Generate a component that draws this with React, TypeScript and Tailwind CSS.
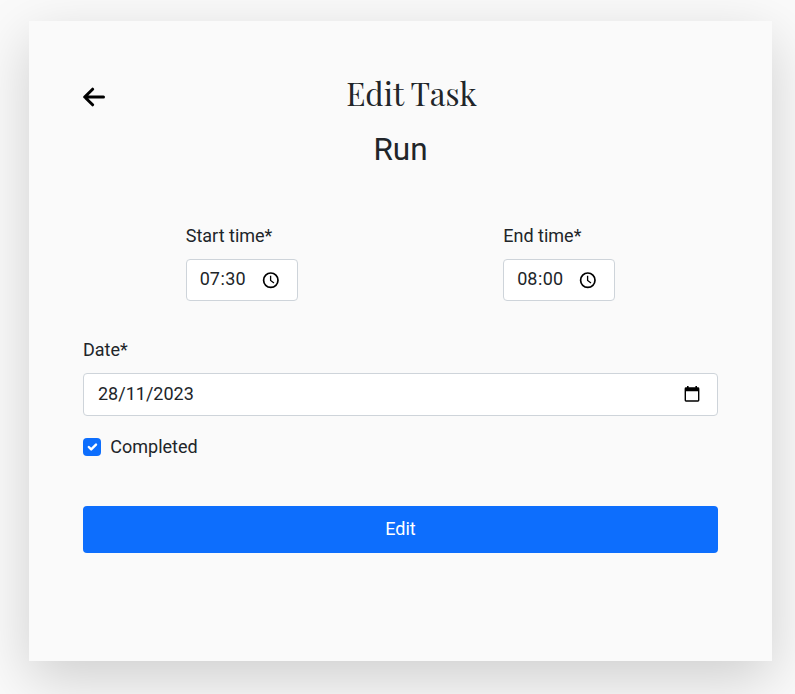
import type { ReactNode } from 'react';

function ClockIcon() {
  return (
    <svg className="-mt-px h-[18px] w-[18px] shrink-0" viewBox="0 0 18 18" fill="none" stroke="#000">
      <circle cx="8.8" cy="9.2" r="7.2" strokeWidth="1.7" />
      <path d="M8.6 4.8V9.5L12 12" strokeWidth="1.3" />
    </svg>
  );
}

function CalendarIcon() {
  return (
    <svg className="-mt-[2px] h-[18px] w-[18px] shrink-0" viewBox="0 0 18 18">
      <path
        fill="#000"
        fillRule="evenodd"
        d="M4 1H5.6V2.3H12.4V1H14V2.3H15Q16.4 2.3 16.4 3.7V15.3Q16.4 16.7 15 16.7H3Q1.6 16.7 1.6 15.3V3.7Q1.6 2.3 3 2.3H4ZM3 6.2V15.3H15V6.2Z"
      />
    </svg>
  );
}

function BackArrow() {
  return (
    <svg
      className="mt-[3px] h-[20px] w-[22px]"
      viewBox="0 0 22 20"
      fill="none"
      stroke="#000"
      strokeWidth="3"
      strokeLinecap="round"
      strokeLinejoin="round"
    >
      <path d="M20.5 10H2M9.6 2.2L1.7 10L9.6 17.8" />
    </svg>
  );
}

function TimeField({ label, children }: { label: string; children: ReactNode }) {
  return (
    <div className="flex w-1/2 justify-center">
      <div className="w-[112px]">
        <div className="h-[27px] whitespace-nowrap">{label}</div>
        <div className="mt-[10px] flex h-[42px] items-center justify-between rounded-[4px] border border-[#ced4da] bg-white pr-[17px] pl-[13px]">
          <span className="-mt-[3px] flex">{children}</span>
          <ClockIcon />
        </div>
      </div>
    </div>
  );
}

export default function App() {
  return (
    <div className="h-[694px] w-full overflow-hidden bg-[#fafafa] pt-[21px] pl-[29px] font-['Roboto',sans-serif] text-[18px] leading-[27px] text-[#212529]">
      <main className="h-[640px] w-[743px] bg-[#fafafa] px-[54px] pt-[54px] shadow-[0_18px_54px_rgba(0,0,0,0.175)]">
        <header className="flex h-[40px] items-center">
          <BackArrow />
          <h1 className="-mt-[4px] flex-1 text-center font-['Playfair_Display','Liberation_Serif',serif] text-[31.5px] leading-[38px]">
            Edit Task
          </h1>
        </header>
        <h2 className="mt-[16px] text-center text-[31.5px] leading-[38px]">Run</h2>
        <div className="mt-[53px] flex">
          <TimeField label="Start time*">
            <span>07</span>
            <span className="px-[0.5px]">:</span>
            <span>30</span>
          </TimeField>
          <TimeField label="End time*">
            <span>08</span>
            <span className="px-[0.5px]">:</span>
            <span>00</span>
          </TimeField>
        </div>
        <div className="mt-[35px] h-[27px]">Date*</div>
        <div className="mt-[10px] flex h-[43px] items-center justify-between rounded-[4px] border border-[#ced4da] bg-white pr-[16px] pl-[14px]">
          <span className="-mt-[2px]">28/11/2023</span>
          <CalendarIcon />
        </div>
        <div className="mt-[17px] flex h-[27px] items-center">
          <span className="flex h-[18px] w-[18px] items-center justify-center rounded-[4px] bg-[#0d6efd]">
            <svg className="h-[16px] w-[16px]" viewBox="0 0 20 20" fill="none" stroke="#fff" strokeWidth="3" strokeLinecap="round" strokeLinejoin="round">
              <path d="M6 10l3 3l6-6" />
            </svg>
          </span>
          <span className="ml-[9.3px]">Completed</span>
        </div>
        <button className="mt-[46px] block h-[47px] w-full rounded-[4px] bg-[#0d6efd] pb-[2px] text-center text-white">
          Edit
        </button>
      </main>
    </div>
  );
}
